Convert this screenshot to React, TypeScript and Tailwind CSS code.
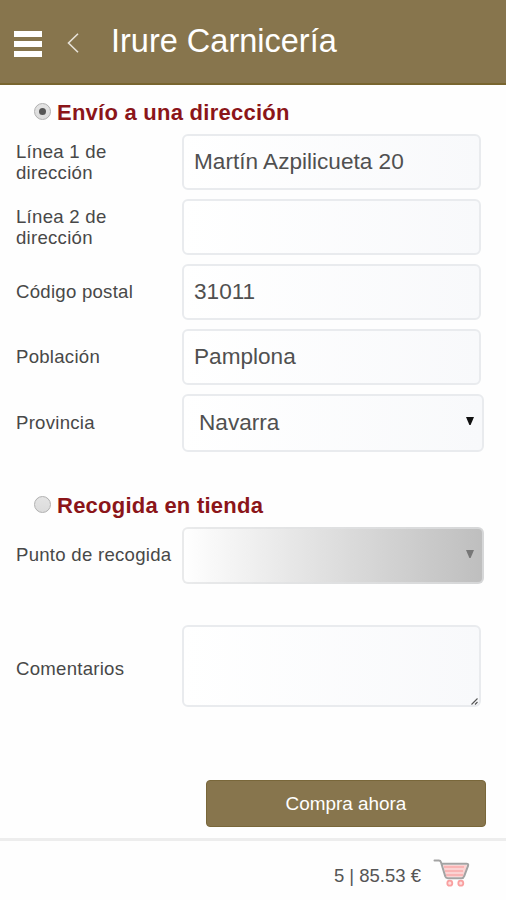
import type { ReactNode } from "react";

const Field = ({
  label,
  className,
  children,
}: {
  label: string;
  className: string;
  children: ReactNode;
}) => {
  return (
    <div className={`flex items-center ${className}`}>
      <label className="w-[166px] shrink-0 whitespace-pre text-[18.6px] leading-[21px] tracking-[0.26px] text-[#484848]">
        {label}
      </label>
      {children}
    </div>
  );
};

const TextInput = ({ value }: { value: string }) => {
  return (
    <div className="flex h-14 w-[299px] items-center rounded-md border-2 border-[#e9ebee] bg-linear-to-r from-white to-[#f8f9fb] px-[10px] text-[22.6px] text-[#505050]">
      {value}
    </div>
  );
};

const Arrow = ({ className }: { className: string }) => {
  return (
    <svg width="8" height="8" viewBox="0 0 8 8" className={className}>
      <path d="M0 0h8L4.6 8H3.4z" fill="currentColor" />
    </svg>
  );
};

const Radio = ({ checked }: { checked?: boolean }) => {
  return (
    <span className="mb-[3px] flex size-[17px] items-center justify-center rounded-full border border-[#b0b0b0] bg-linear-to-b from-[#e4e4e4] to-[#dcdcdc]">
      {checked && <span className="size-[7px] rounded-full bg-[#555]" />}
    </span>
  );
};

const CartIcon = () => {
  return (
    <svg width="38" height="30" viewBox="0 0 38 30" fill="none">
      <path d="M10 6h24l-3 12H13z" fill="#fbd3d3" />
      <path d="M11 8h20M12 12h18M13 16h17" stroke="#f9b4b4" strokeWidth="2" />
      <path
        d="M1.5 1.5h4.3q1.7 0 2.2 1.7l4.3 14.3q.6 1.8 2.7 1.8h13.5q2 0 2.6-2l4-10.6q.6-2-1.6-2H8.6"
        stroke="#a3a3a3"
        strokeWidth="2"
        strokeLinecap="round"
      />
      <circle cx="16.8" cy="24.2" r="2.5" fill="#fde0e0" stroke="#f9a0a0" strokeWidth="1.8" />
      <circle cx="27.8" cy="24.2" r="2.5" fill="#fde0e0" stroke="#f9a0a0" strokeWidth="1.8" />
    </svg>
  );
};

const App = () => {
  return (
    <div className="flex h-[900px] w-[506px] flex-col bg-[#fefefe] font-['Liberation_Sans',Arial,sans-serif]">
      <header className="flex h-[85px] shrink-0 items-center border-b-2 border-[#78652f] bg-[#87754d] pl-[14px]">
        <div className="mt-[5px] flex w-7 flex-col gap-1">
          <span className="h-[6px] bg-white" />
          <span className="h-[6px] bg-white" />
          <span className="h-[6px] bg-white" />
        </div>
        <svg width="12" height="20" viewBox="0 0 12 20" fill="none" className="mt-[3px] ml-[25px]">
          <path d="M11 .7 1.5 10l9.5 9.3" stroke="#e7e2d8" strokeWidth="1.6" />
        </svg>
        <h1 className="mb-px ml-[32px] text-[32.5px] leading-none text-white">
          Irure Carnicería
        </h1>
      </header>

      <main className="flex grow flex-col pl-4">
        <div className="flex h-[49px] items-center pt-[6px] pl-[18px]">
          <Radio checked />
          <h2 className="ml-[6px] text-[22px] font-bold tracking-[0.25px] text-[#8b1519]">
            Envío a una dirección
          </h2>
        </div>
        <Field label={"Línea 1 de\ndirección"} className="h-14">
          <TextInput value="Martín Azpilicueta 20" />
        </Field>
        <Field label={"Línea 2 de\ndirección"} className="mt-[9px] h-14">
          <TextInput value="" />
        </Field>
        <Field label="Código postal" className="mt-[9px] h-14 [&>label]:mb-px">
          <TextInput value="31011" />
        </Field>
        <Field label="Población" className="mt-[9px] h-14 [&>label]:mb-px">
          <TextInput value="Pamplona" />
        </Field>
        <Field label="Provincia" className="mt-[9px] h-[58px] [&>label]:mb-px">
          <div className="flex h-[58px] w-[302px] items-center justify-between rounded-md border-2 border-[#e9ebee] bg-linear-to-r from-white to-[#f8f9fb] pr-[8px] pl-[15px] text-[22.6px] text-[#505050]">
            Navarra
            <Arrow className="mb-1 text-[#111]" />
          </div>
        </Field>

        <div className="mt-[28px] flex h-[47px] items-center pt-[4px] pl-[18px]">
          <Radio />
          <h2 className="ml-[6px] text-[22px] font-bold tracking-[0.25px] text-[#8b1519]">
            Recogida en tienda
          </h2>
        </div>
        <Field label="Punto de recogida" className="h-[57px] [&>label]:mb-[2px]">
          <div className="flex h-[57px] w-[302px] items-center justify-end rounded-md border-2 border-[#dfe1e3]/70 bg-linear-to-r from-white to-[#bebebe] bg-origin-border pr-[8px]">
            <Arrow className="mb-1 text-[#777]" />
          </div>
        </Field>
        <Field label="Comentarios" className="mt-[41px] h-[82px] [&>label]:mt-1">
          <div className="flex h-[82px] w-[299px] items-end justify-end rounded-md border-2 border-[#e9ebee] bg-linear-to-r from-white to-[#f8f9fb]">
            <svg width="7" height="7" viewBox="0 0 7 7" className="mr-px">
              <path d="M.5 6.5l6-6M4 6.5l2.5-2.5" stroke="#555" strokeWidth="1.1" />
            </svg>
          </div>
        </Field>

        <button className="mt-[73px] ml-[190px] h-[47px] w-[280px] rounded-[4px] border border-[#79673a] bg-[#87754d] pt-[2px] text-[18.9px] text-white">
          Compra ahora
        </button>
      </main>

      <footer className="flex h-[62px] shrink-0 items-center justify-end border-t-3 border-[#ededed] pt-[6px] pr-[35px]">
        <span className="mt-[5px] text-[18.5px] text-[#555]">5 | 85.53 €</span>
        <span className="ml-[12px]">
          <CartIcon />
        </span>
      </footer>
    </div>
  );
};

export default App;
